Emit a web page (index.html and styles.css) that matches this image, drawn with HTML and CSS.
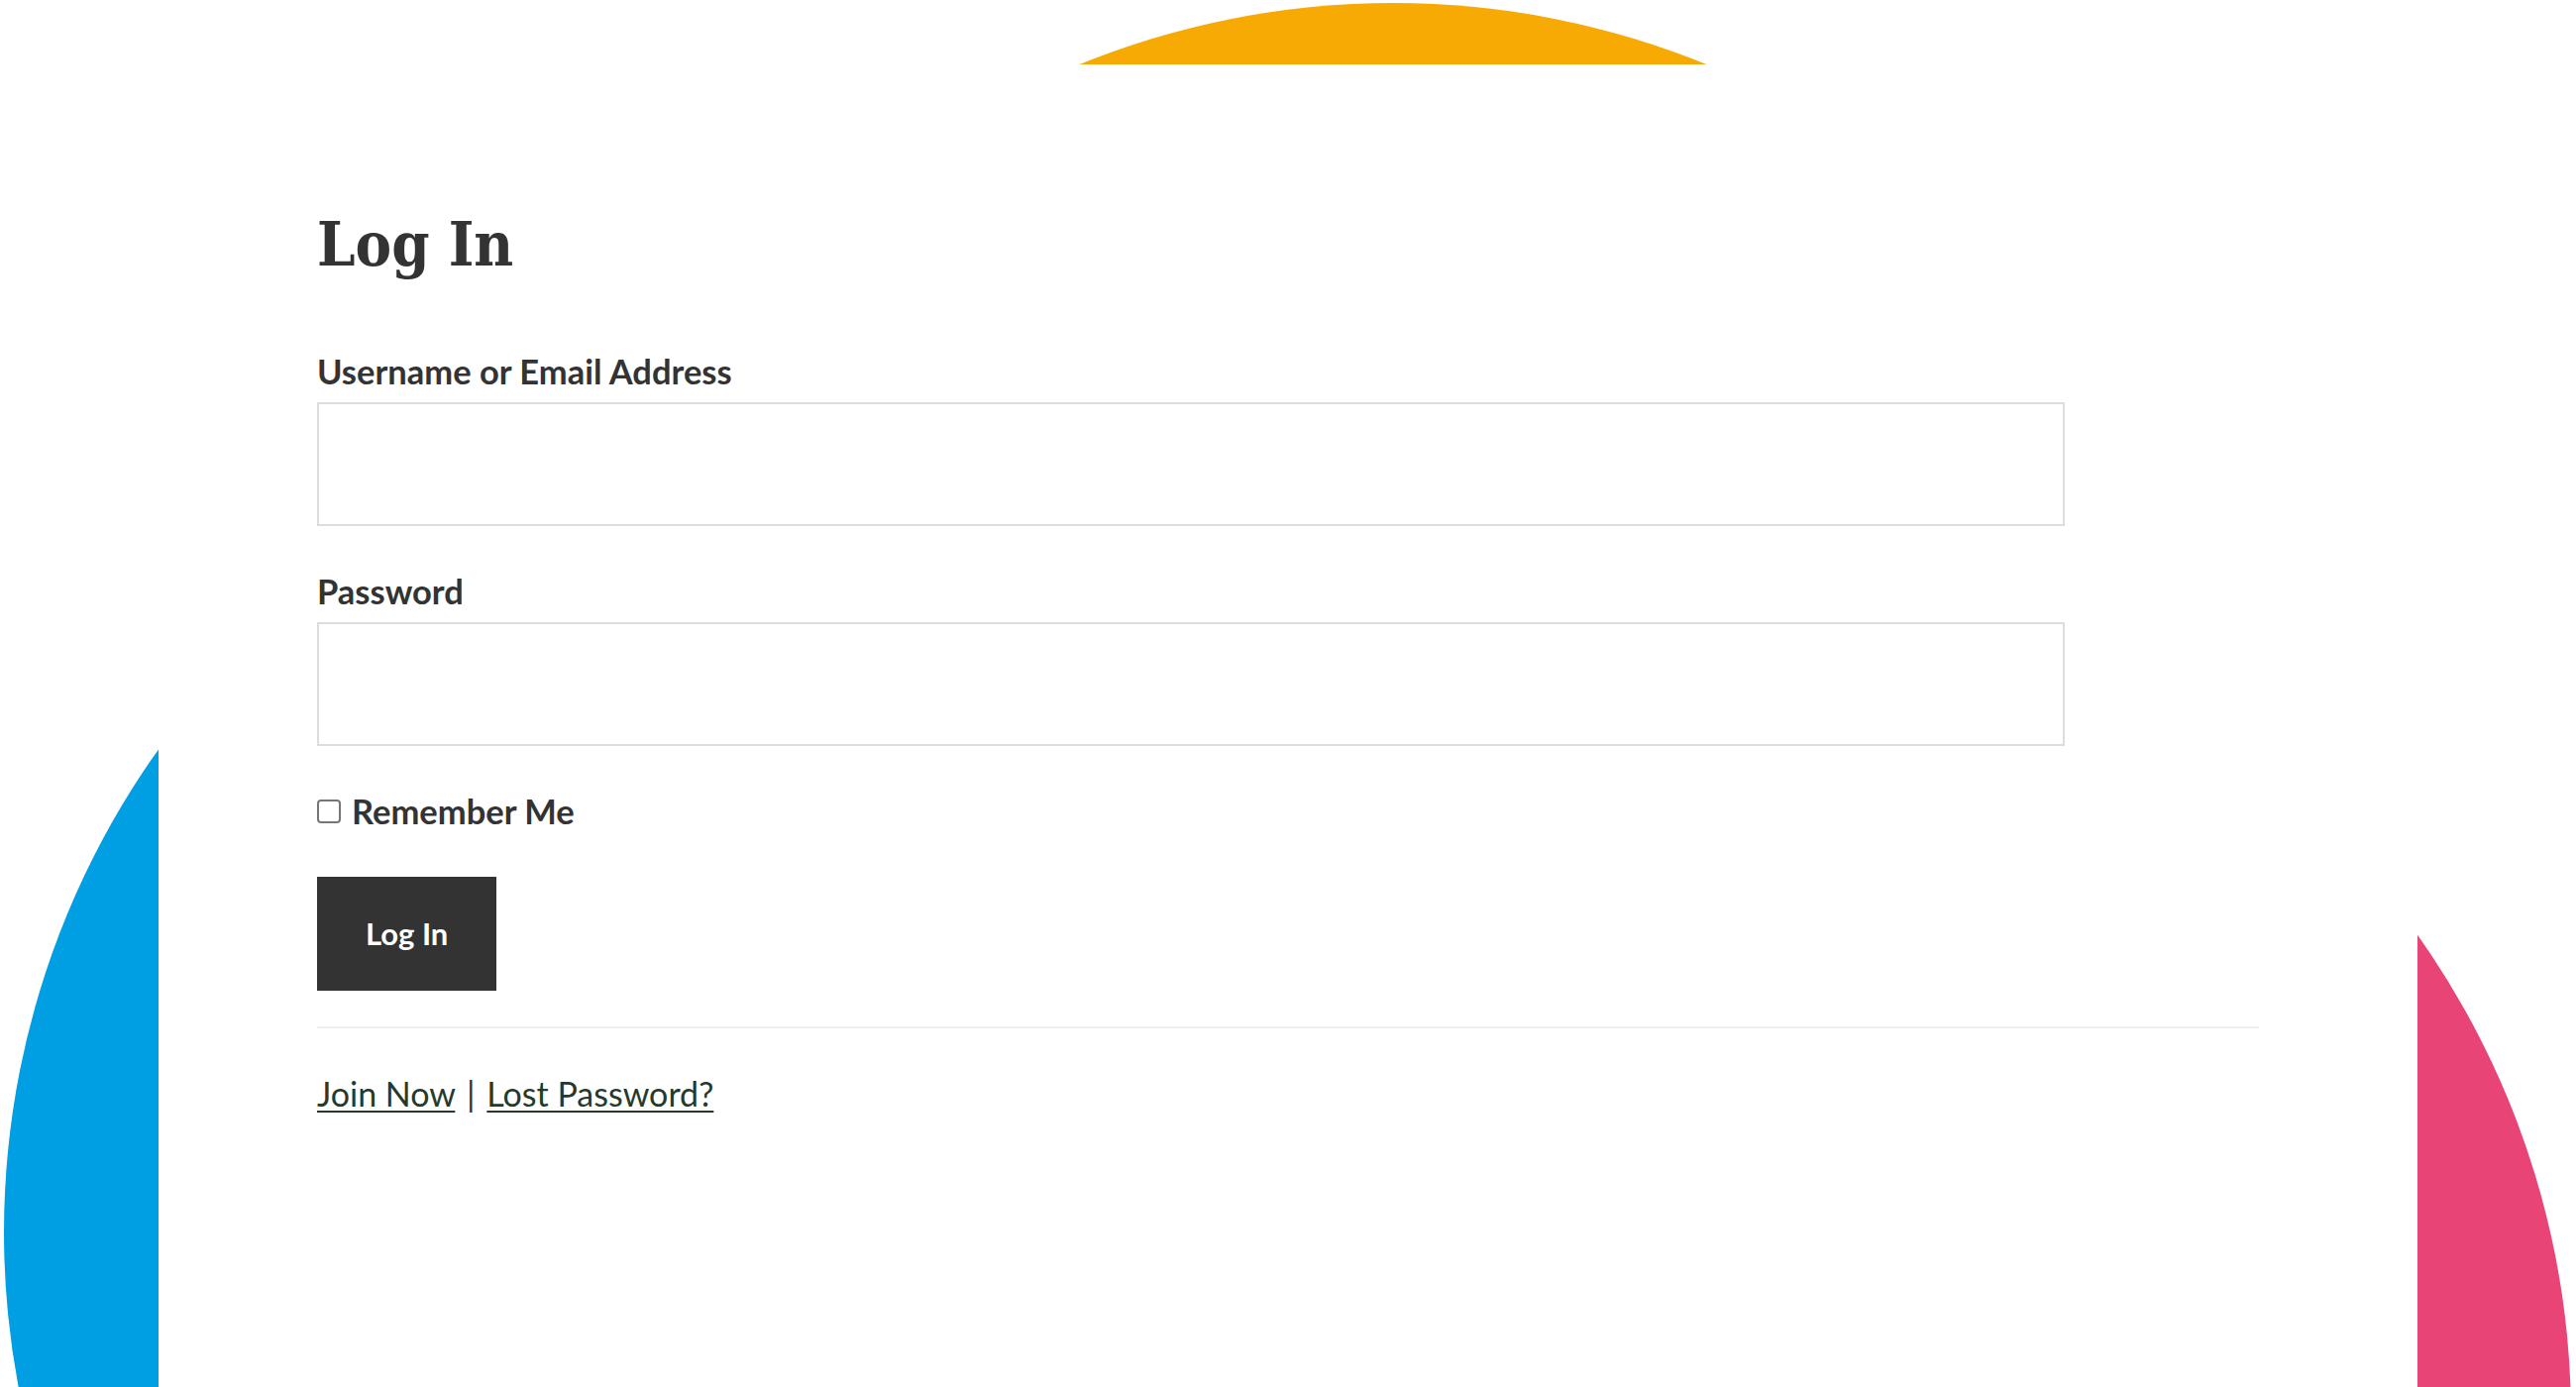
FILE: index.html
```html
<!DOCTYPE html>
<html lang="en">
<head>
<meta charset="utf-8">
<title>Log In</title>
<link rel="stylesheet" href="styles.css">
</head>
<body>
<div class="page">
  <div class="blob blob-orange"></div>
  <div class="blob blob-blue"></div>
  <div class="blob blob-pink"></div>
  <main class="panel">
    <h1 class="title">Log In</h1>
    <form class="login-form">
      <p class="field">
        <label class="field-label" for="user_login">Username or Email Address</label>
        <input class="text-input" id="user_login" type="text">
      </p>
      <p class="field">
        <label class="field-label" for="user_pass">Password</label>
        <input class="text-input" id="user_pass" type="password">
      </p>
      <p class="remember">
        <input class="check" id="rememberme" type="checkbox">
        <label class="remember-label" for="rememberme">Remember Me</label>
      </p>
      <p class="submit-row">
        <button class="btn" type="submit">Log In</button>
      </p>
    </form>
    <hr class="divider">
    <p class="links"><a class="link" href="#">Join Now</a> <span class="sep">|</span> <a class="link" href="#">Lost Password?</a></p>
  </main>
</div>
</body>
</html>
```
FILE: styles.css
```css
html, body {
  margin: 0;
  padding: 0;
  background: #fff;
}

body {
  font-family: Lato, "Noto Sans", sans-serif;
  color: #333;
}

.page {
  position: relative;
  height: 1400px;
  overflow: hidden;
}

.blob {
  position: absolute;
  width: 1680px;
  height: 1680px;
  border-radius: 50%;
}

.blob-orange {
  background: #f8aa04;
  left: 566px;
  top: 3px;
}

.blob-blue {
  background: #009fe3;
  left: 4px;
  top: 404px;
}

.blob-pink {
  background: #e84476;
  left: 915px;
  top: 590px;
}

.panel {
  position: relative;
  z-index: 1;
  box-sizing: border-box;
  width: 2280px;
  min-height: 1335px;
  margin: 65px auto 0;
  padding: 146px 160px 0;
  background: #fff;
}

.title {
  margin: 0;
  font-family: "DejaVu Serif", "Liberation Serif", serif;
  font-stretch: condensed;
  font-weight: 700;
  font-size: 61px;
  line-height: 71px;
  color: #333;
}

.login-form {
  margin-top: 68px;
}

.field,
.remember,
.submit-row,
.links {
  margin: 0;
}

.field {
  margin-bottom: 41px;
}

.field-label {
  display: block;
  font-weight: 700;
  font-size: 34.5px;
  line-height: 50px;
  margin-bottom: 6px;
}

.text-input {
  display: block;
  box-sizing: border-box;
  width: 90%;
  height: 125px;
  margin: 0;
  padding: 0 20px;
  border: 2px solid #dddddd;
  border-radius: 0;
  background: #fff;
  font-family: inherit;
  font-size: 35px;
  outline: none;
}

.remember {
  display: flex;
  align-items: center;
  gap: 11px;
  margin-bottom: 41px;
  font-weight: 700;
  font-size: 34.5px;
  line-height: 50px;
}

.check {
  appearance: none;
  -webkit-appearance: none;
  box-sizing: border-box;
  width: 24px;
  height: 24px;
  margin: 0;
  border: 2px solid #767676;
  border-radius: 4px;
  background: #fff;
}

.submit-row {
  margin-bottom: 36px;
}

.btn {
  display: block;
  margin: 0;
  padding: 40px 49px;
  border: 0;
  border-radius: 0;
  background: #333;
  color: #fff;
  font-family: inherit;
  font-weight: 700;
  font-size: 31px;
  line-height: 35px;
  cursor: pointer;
}

.divider {
  margin: 0 0 41px;
  height: 0;
  border: 0;
  border-top: 2px solid #eeeeee;
}

.links {
  font-size: 34px;
  line-height: 50px;
  color: #333;
}

.sep {
  margin: 0 3px;
}

.link {
  color: #263a2c;
  text-decoration: underline;
  text-decoration-thickness: 2px;
  text-underline-offset: 4px;
}
```
